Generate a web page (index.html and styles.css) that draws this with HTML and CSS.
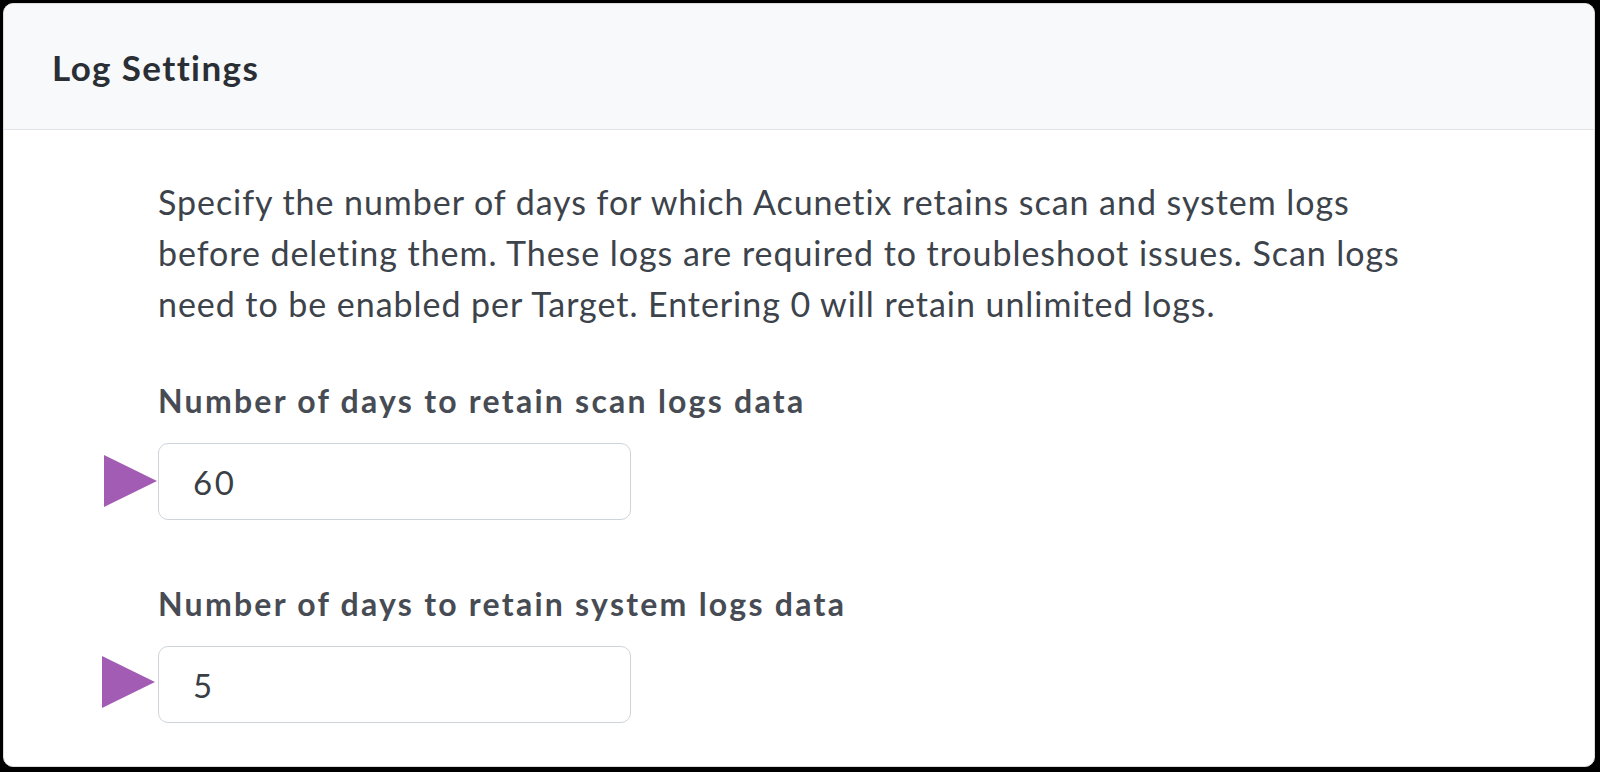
FILE: index.html
```html
<!DOCTYPE html>
<html lang="en">
<head>
<meta charset="utf-8">
<title>Log Settings</title>
<link rel="stylesheet" href="styles.css">
</head>
<body>
<div class="card">
  <div class="card-header">
    <h1 class="card-title">Log Settings</h1>
  </div>
  <div class="card-body">
    <p class="desc">Specify the number of days for which Acunetix retains scan and system logs<br>before deleting them. These logs are required to troubleshoot issues. Scan logs<br>need to be enabled per Target. Entering 0 will retain unlimited logs.</p>
    <div class="field">
      <label class="field-label" for="scanlogs">Number of days to retain scan logs data</label>
      <div class="input-wrap">
        <svg class="marker" viewBox="0 0 53 52" width="53" height="52"><polygon points="0,0 53,26 0,52" fill="#a35cb4"/></svg>
        <input class="field-input" id="scanlogs" type="text" value="60">
      </div>
    </div>
    <div class="field field-second">
      <label class="field-label" for="syslogs">Number of days to retain system logs data</label>
      <div class="input-wrap">
        <svg class="marker" viewBox="0 0 53 52" width="53" height="52"><polygon points="0,0 53,26 0,52" fill="#a35cb4"/></svg>
        <input class="field-input" id="syslogs" type="text" value="5">
      </div>
    </div>
  </div>
</div>
</body>
</html>
```
FILE: styles.css
```css
html, body {
  margin: 0;
  height: 100%;
}
body {
  background: #000;
  box-sizing: border-box;
  padding: 3px 5px 5px 3px;
  font-family: Lato, "Liberation Sans", sans-serif;
}
.card {
  height: 100%;
  box-sizing: border-box;
  background: #fff;
  border: 1px solid #dcdcdc;
  border-radius: 10px;
  overflow: hidden;
}
.card-header {
  height: 126px;
  box-sizing: border-box;
  background: #f8f9fa;
  border-bottom: 1px solid #e1e3e6;
  display: flex;
  align-items: center;
  padding-left: 48px;
}
.card-title {
  margin: 0;
  font-size: 35px;
  font-weight: 700;
  letter-spacing: 1.4px;
  color: #2a2e35;
  line-height: 40px;
}
.card-body {
  padding: 46px 0 0 154px;
}
.desc {
  margin: 0;
  font-size: 34px;
  line-height: 51px;
  letter-spacing: 0.95px;
  color: #3d434b;
}
.field {
  margin-top: 52px;
}
.field-second {
  margin-top: 64px;
}
.field-label {
  display: block;
  font-size: 32px;
  line-height: 40px;
  font-weight: 700;
  letter-spacing: 2.25px;
  color: #474c54;
  margin-bottom: 22px;
}
.input-wrap {
  position: relative;
  width: 473px;
}
.marker {
  position: absolute;
  left: -54px;
  top: 12px;
}
.field-second .marker {
  left: -56px;
  top: 10px;
}
.field-input {
  display: block;
  box-sizing: border-box;
  width: 473px;
  height: 77px;
  border: 1px solid #ced4da;
  border-radius: 10px;
  padding: 0 0 0 34px;
  font-family: Lato, "Liberation Sans", sans-serif;
  font-size: 33px;
  letter-spacing: 2.5px;
  color: #3a3f46;
  background: #fff;
  outline: none;
}
```
